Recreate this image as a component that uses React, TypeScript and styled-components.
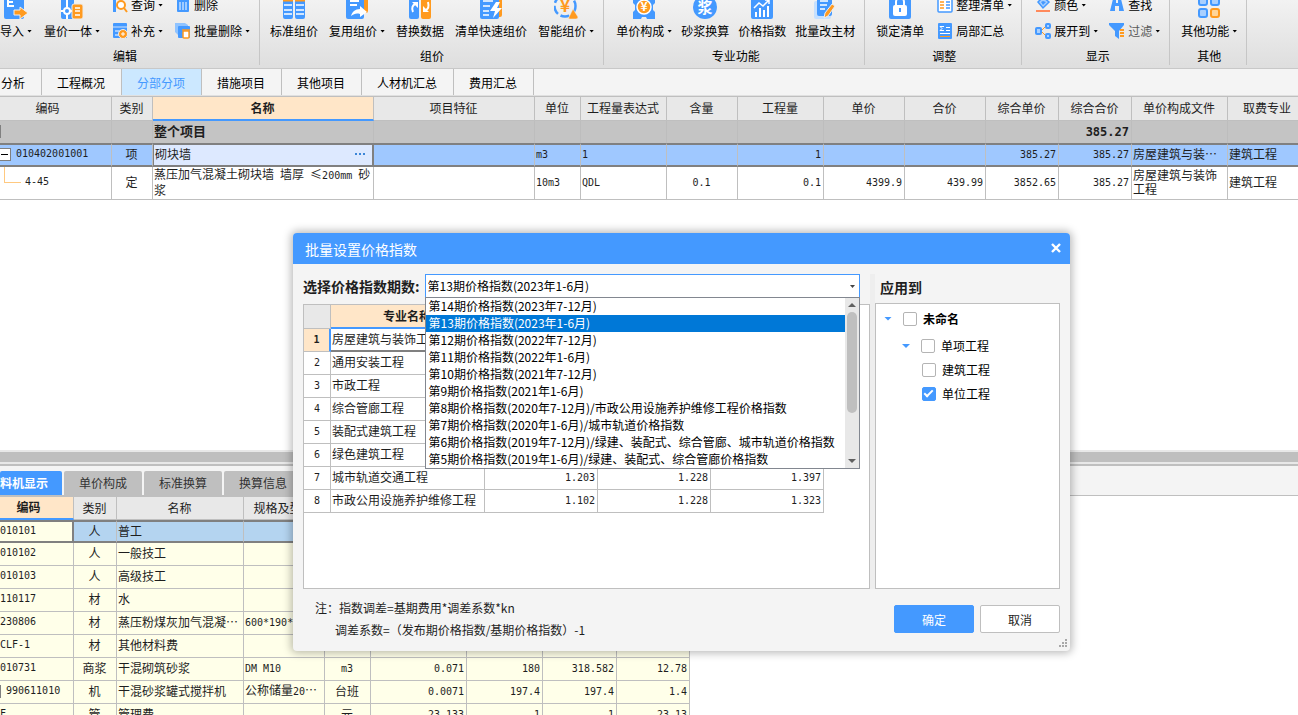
import React, { useState } from "react";
import styled, { createGlobalStyle, css } from "styled-components";

const BLUE = "#4499ff";
const ORANGE = "#ff9a1f";
const LINE = "#bfbfbf";
const CJK = `"Noto Sans CJK SC", "Liberation Sans", sans-serif`;
const MONO = `"DejaVu Sans Mono", "Noto Sans CJK SC", monospace`;

const GlobalStyle = createGlobalStyle`
  *, *::before, *::after { box-sizing: border-box; }
  body { margin: 0; background: #fff; color: #1e1e1e; font: 12px/16px ${CJK}; overflow: hidden; }
  button, select, input { font: inherit; color: inherit; }
`;

const Page = styled.div`
  position: relative;
  display: flex;
  flex-direction: column;
  height: 100vh;
  overflow: hidden;
`;

/* ---------- ribbon ---------- */

const Ribbon = styled.header`
  display: flex;
  align-items: flex-end;
  flex: none;
  height: 69px;
  padding-bottom: 3px;
  overflow: hidden;
  color: #000;
  background: linear-gradient(#f2f2f2, #dedede);
  border-bottom: 1px solid #c8c8c8;
`;

const Group = styled.section<{ $start: number }>`
  flex: none;
  padding: 0 9px 1px ${(p) => p.$start}px;
  border-right: 1px solid #c6c6c6;
`;

const GroupBody = styled.div<{ $gap: number }>`
  display: flex;
  align-items: flex-end;
  gap: ${(p) => p.$gap}px;
`;

const GroupLabel = styled.div`
  margin-top: 4px;
  text-align: center;
`;

const BigButton = styled.button`
  display: flex;
  flex-direction: column;
  align-items: center;
  gap: 4px;
  padding: 0 0 5px;
  border: 0;
  background: none;
  white-space: nowrap;
`;

const SmallColumn = styled.div`
  display: flex;
  flex-direction: column;
`;

const SmallButton = styled.button<{ $dim?: boolean }>`
  display: flex;
  align-items: center;
  gap: 3px;
  height: 26px;
  padding: 0;
  border: 0;
  background: none;
  white-space: nowrap;
  color: ${(p) => (p.$dim ? "#5a5a5a" : "#000")};
`;

const Caption = styled.span`
  display: flex;
  align-items: center;
  gap: 3px;
`;

const Caret = styled.i`
  width: 5px;
  height: 3px;
  background: #000;
  clip-path: polygon(0 0, 100% 0, 50% 100%);
`;

const Svg24 = ({ children }: { children: React.ReactNode }) => (
  <svg width="24" height="24" viewBox="0 0 24 24" fill="none" aria-hidden="true">{children}</svg>
);
const Svg16 = ({ children }: { children: React.ReactNode }) => (
  <svg width="16" height="16" viewBox="0 0 16 16" fill="none" aria-hidden="true">{children}</svg>
);

const ImportIcon = () => (
  <Svg24>
    <rect x="0" y="1" width="20" height="23" rx="2" fill={BLUE} />
    <path d="M9 4H4v7h6M4 7h5" stroke="#fff" strokeWidth="2" />
    <path d="M10 15h6v-3l8 6-8 6v-4h-6z" fill={ORANGE} stroke="#efefef" strokeWidth="1" />
  </Svg24>
);
const AllInOneIcon = () => (
  <Svg24>
    <rect x="1" y="1" width="13" height="23" rx="2" fill={BLUE} />
    <circle cx="7" cy="16" r="3" fill={BLUE} stroke="#fff" strokeWidth="2" />
    <path d="M7 2v11M7 19v5M1 16h3M10 16h3" stroke="#fff" strokeWidth="2" />
    <rect x="12" y="9" width="11" height="15" rx="2" fill={ORANGE} stroke="#ececec" />
    <path d="M15 13h5M15 16h5M15 20h5" stroke="#fff" strokeWidth="1.5" />
  </Svg24>
);
const StandardIcon = () => (
  <Svg24>
    <rect x="1" y="2" width="10" height="22" rx="2" fill={BLUE} />
    <rect x="13" y="2" width="10" height="22" rx="2" fill={BLUE} />
    <path d="M1 5h10M13 5h10" stroke={ORANGE} strokeWidth="3" />
    <path d="M2 10h8M2 15h8M2 19h8M14 10h8M14 15h8M14 19h8" stroke="#fff" strokeWidth="1.5" />
  </Svg24>
);
const ReuseIcon = () => (
  <Svg24>
    <rect x="12" y="1" width="11" height="17" rx="2" fill={ORANGE} />
    <rect x="1" y="1" width="18" height="23" rx="2" fill={BLUE} />
    <path d="M5 6h9M5 10h7" stroke="#fff" strokeWidth="2" />
    <path d="M6 21c1-4 4-7 9-7v-3l7 6-7 5v-3c-4-1-6 0-9 2z" fill="#fff" />
  </Svg24>
);
const ReplaceIcon = () => (
  <Svg24>
    <rect x="1" y="1" width="10" height="23" rx="2" fill={BLUE} />
    <rect x="13" y="1" width="10" height="23" rx="2" fill={ORANGE} />
    <path d="M5 17c-2-4 0-7 2-8M20 7c1 4 0 7-2 8" stroke="#fff" strokeWidth="2" />
    <path d="M4 7h6v6zM21 17h-6v-6z" fill="#fff" />
  </Svg24>
);
const QuickIcon = () => (
  <Svg24>
    <rect x="12" y="1" width="11" height="21" rx="2" fill={ORANGE} />
    <rect x="1" y="1" width="19" height="23" rx="2" fill={BLUE} />
    <path d="M4 6h10M4 11h7M4 16h6M4 20h6" stroke="#fff" strokeWidth="1.5" />
    <path d="M17 7l-6 9h5l-2 7 9-10h-5l3-6z" fill="#fff" />
  </Svg24>
);
const SmartIcon = () => (
  <Svg24>
    <circle cx="11" cy="11" r="10.5" stroke={BLUE} strokeWidth="2.5" strokeDasharray="9 3" />
    <text x="11" y="17" textAnchor="middle" fontSize="17" fontWeight="bold" fill={ORANGE}>¥</text>
    <path d="M19 14l5 8q0 2-2 2h-6q-2 0-1-2z" fill={ORANGE} stroke="#eee" strokeWidth=".5" />
  </Svg24>
);
const UnitPriceIcon = () => (
  <Svg24>
    <path d="M1 1h22v7l-2 2v5l2 2v7h-8l-1-2h-4l-1 2H1v-7l2-2v-5L1 8z" fill={BLUE} />
    <circle cx="12" cy="12" r="7" fill={ORANGE} stroke="#fff" strokeWidth="1.5" />
    <text x="12" y="16" textAnchor="middle" fontSize="12" fontWeight="bold" fill="#fff">¥</text>
  </Svg24>
);
const MortarIcon = () => (
  <Svg24>
    <circle cx="12" cy="12" r="12" fill={BLUE} />
    <text x="12" y="18" textAnchor="middle" fontSize="15" fontWeight="bold" fill="#fff">浆</text>
  </Svg24>
);
const IndexIcon = () => (
  <Svg24>
    <rect x="1" y="1" width="22" height="23" rx="2" fill={BLUE} />
    <path d="M6 22v-5M10 22v-9M14 22v-7M18 22V11" stroke="#fff" strokeWidth="2" />
    <path d="M4 13l5-5 4 3 6-6M15 5h4v4" stroke="#fff" strokeWidth="1.5" />
  </Svg24>
);
const EditMaterialIcon = () => (
  <Svg24>
    <rect x="1" y="6" width="17" height="18" rx="2" fill="#c5e0ff" />
    <rect x="4" y="1" width="15" height="20" rx="2" fill={BLUE} />
    <path d="M7 6h8M7 10h7M7 14h5" stroke="#fff" strokeWidth="1.5" />
    <path d="M19 9l3 2-7 10-4 2 1-5z" fill={ORANGE} stroke="#e9eef5" strokeWidth="1" />
  </Svg24>
);
const LockIcon = () => (
  <Svg24>
    <rect x="1" y="1" width="22" height="23" rx="2" fill={BLUE} />
    <rect x="5" y="10" width="14" height="11" rx="2" fill="#fff" />
    <path d="M8 11V7a4 4 0 0 1 8 0v4" stroke="#fff" strokeWidth="2" />
    <path d="M12 13v4" stroke={BLUE} strokeWidth="2" />
  </Svg24>
);
const OtherIcon = () => (
  <Svg24>
    {[[2, 2], [14, 2], [2, 14], [14, 14]].map(([x, y]) => (
      <rect key={`${x}-${y}`} x={x} y={y} width="8" height="8" rx="2" strokeWidth="2"
        fill={x + y === 28 ? "#ffd59a" : "#a9d0ff"} stroke={x + y === 28 ? ORANGE : BLUE} />
    ))}
  </Svg24>
);

const QueryIcon = () => (
  <Svg16>
    <path d="M1 0h3v15H1z" fill={BLUE} />
    <circle cx="9" cy="8" r="4" stroke={ORANGE} strokeWidth="2" fill="#fff" />
    <path d="M12 11l3 4" stroke={ORANGE} strokeWidth="2" />
  </Svg16>
);
const AddIcon = () => (
  <Svg16>
    <rect x="1" y="0" width="14" height="15" rx="1" fill={BLUE} />
    <path d="M1 4h14" stroke="#cfe4ff" />
    <path d="M3 8h5M3 12h4" stroke="#fff" />
    <circle cx="11" cy="11" r="4.5" fill={ORANGE} stroke="#eee" />
    <path d="M11 9v4M9 11h4" stroke="#fff" />
  </Svg16>
);
const TrashIcon = () => (
  <Svg16>
    <path d="M2 3h12v11q0 1-1 1H3q-1 0-1-1z" fill={BLUE} />
    <path d="M5 5v8M8 5v8M11 5v8" stroke="#fff" />
  </Svg16>
);
const BatchTrashIcon = () => (
  <Svg16>
    <path d="M0 0h10l3 2v10H3L0 9z" fill="#8fc3ff" />
    <rect x="3" y="3" width="12" height="12" rx="1" fill={BLUE} />
    <rect x="8" y="8" width="6" height="7" rx="1" fill="#fff" stroke={ORANGE} strokeWidth="1.5" />
    <path d="M7 7h8" stroke={ORANGE} strokeWidth="1.5" />
  </Svg16>
);
const TidyIcon = () => (
  <Svg16>
    <rect x="1" y="0" width="14" height="15" rx="1" stroke={BLUE} strokeWidth="1.5" fill="#fff" />
    <path d="M3 5h4M3 8h4M3 11h4" stroke={ORANGE} strokeWidth="1.5" />
    <path d="M9 5h4M9 8h4M9 11h4" stroke={BLUE} strokeWidth="1.5" />
  </Svg16>
);
const SumIcon = () => (
  <Svg16>
    <rect x="1" y="0" width="14" height="16" rx="1" fill={BLUE} />
    <path d="M7 3.500H3l2 2-2 2h4M9 4.500h4M9 7.500h4M3 10.500h10" stroke="#fff" />
    <path d="M3 13.500h10" stroke={ORANGE} />
  </Svg16>
);
const ColorIcon = () => (
  <Svg16>
    <path d="M8 0l6 5-6 6-5-6z" fill="#a9d0ff" stroke={BLUE} strokeWidth="1.5" />
    <path d="M8 4l3 1-3 3-2-3z" fill={BLUE} />
    <path d="M1 14h14" stroke="#ff8a5c" strokeWidth="2" />
  </Svg16>
);
const ExpandIcon = () => (
  <Svg16>
    <path d="M6 8l5-5M6 8l5 5" stroke={ORANGE} />
    <rect x="1" y="5" width="5" height="6" rx="1" fill="#a9d0ff" stroke={BLUE} strokeWidth="2" />
    <rect x="11" y="1" width="4" height="4" rx="1" fill="#a9d0ff" stroke={BLUE} strokeWidth="2" />
    <rect x="11" y="11" width="4" height="4" rx="1" fill="#a9d0ff" stroke={BLUE} strokeWidth="2" />
  </Svg16>
);
const FindIcon = () => (
  <Svg16>
    <path d="M4 2h3v4h2V2h3l3 12h-5V9H6v5H1z" fill={BLUE} />
  </Svg16>
);
const FilterIcon = () => (
  <Svg16>
    <path d="M0 0h15v2l-5 6v8l-4-3V8L0 2z" fill={BLUE} />
    <path d="M11 7h4M11 10h4M11 13h4" stroke={ORANGE} strokeWidth="2" />
  </Svg16>
);

type Tool = { text: string; icon: () => React.ReactElement; menu?: boolean; dim?: boolean };

const Big = ({ text, icon: Icon, menu }: Tool) => (
  <BigButton type="button">
    <Icon />
    <Caption>{text}{menu && <Caret />}</Caption>
  </BigButton>
);

const Small = ({ text, icon: Icon, menu, dim }: Tool) => (
  <SmallButton type="button" $dim={dim}>
    <Icon />
    <Caption>{text}{menu && <Caret />}</Caption>
  </SmallButton>
);

type RibbonGroup = { label: string; start: number; gap: number; big: Tool[]; small: Tool[][] };

const ribbon: RibbonGroup[] = [
  {
    label: "编辑", start: 0, gap: 12,
    big: [{ text: "导入", icon: ImportIcon, menu: true }, { text: "量价一体", icon: AllInOneIcon, menu: true }],
    small: [
      [{ text: "查询", icon: QueryIcon, menu: true }, { text: "补充", icon: AddIcon, menu: true }],
      [{ text: "删除", icon: TrashIcon }, { text: "批量删除", icon: BatchTrashIcon, menu: true }],
    ],
  },
  {
    label: "组价", start: 10, gap: 11,
    big: [
      { text: "标准组价", icon: StandardIcon },
      { text: "复用组价", icon: ReuseIcon, menu: true },
      { text: "替换数据", icon: ReplaceIcon },
      { text: "清单快速组价", icon: QuickIcon },
      { text: "智能组价", icon: SmartIcon, menu: true },
    ],
    small: [],
  },
  {
    label: "专业功能", start: 12, gap: 9,
    big: [
      { text: "单价构成", icon: UnitPriceIcon, menu: true },
      { text: "砂浆换算", icon: MortarIcon },
      { text: "价格指数", icon: IndexIcon },
      { text: "批量改主材", icon: EditMaterialIcon },
    ],
    small: [],
  },
  {
    label: "调整", start: 11, gap: 13,
    big: [{ text: "锁定清单", icon: LockIcon }],
    small: [[{ text: "整理清单", icon: TidyIcon, menu: true }, { text: "局部汇总", icon: SumIcon }]],
  },
  {
    label: "显示", start: 13, gap: 11,
    big: [],
    small: [
      [{ text: "颜色", icon: ColorIcon, menu: true }, { text: "展开到", icon: ExpandIcon, menu: true }],
      [{ text: "查找", icon: FindIcon }, { text: "过滤", icon: FilterIcon, menu: true, dim: true }],
    ],
  },
  { label: "其他", start: 11, gap: 0, big: [{ text: "其他功能", icon: OtherIcon, menu: true }], small: [] },
];

/* ---------- page tabs ---------- */

const PageTabs = styled.nav`
  display: flex;
  flex: none;
  height: 27px;
  background: #f4f4f4;
  border-bottom: 1px solid #e0e0e0;
`;

const PageTab = styled.button<{ $active?: boolean }>`
  padding: 2px 16px 0 15px;
  border: 0;
  border-right: 1px solid ${LINE};
  background: ${(p) => (p.$active ? "#cce8ff" : "transparent")};
  color: ${(p) => (p.$active ? BLUE : "#000")};
  &:first-child { padding-left: 1px; }
`;

/* ---------- data grids ---------- */

const Latin = styled.span`
  font-family: ${MONO};
  font-size: 10px;
`;

/* Latin runs take the half-width face, so that two of them fill one ideograph. */
const CellText = ({ text }: { text: string }) => (
  <>
    {text.split(/([\x20-\x7e]+)/).map((run, i) => (i % 2 ? <Latin key={i}>{run}</Latin> : run))}
  </>
);

type Align = "left" | "center" | "right";

const Grid = styled.table`
  border-spacing: 0;
  table-layout: fixed;
  border-top: 1px solid ${LINE};
`;

const MainGrid = styled(Grid)`
  width: 100%;
  min-width: 1308px;
`;

const Th = styled.th<{ $active?: boolean; $clipped?: boolean }>`
  height: 24px;
  padding: 0 ${(p) => (p.$clipped ? 16 : 1)}px 1px 0;
  overflow: hidden;
  white-space: nowrap;
  font-weight: ${(p) => (p.$active ? "bold" : "normal")};
  background: ${(p) => (p.$active ? "#ffe6c8" : "#e8e8e8")};
  border-right: 1px solid ${LINE};
  border-bottom: ${(p) => (p.$active ? `2px solid ${BLUE}` : `1px solid ${LINE}`)};
`;

const Td = styled.td<{ $align?: Align; $wrap?: boolean }>`
  position: relative;
  height: 23px;
  padding: 0 ${(p) => (p.$wrap ? 0 : 2)}px 2px 1px;
  overflow: hidden;
  line-height: 14px;
  white-space: ${(p) => (p.$wrap ? "normal" : "nowrap")};
  text-align: ${(p) => p.$align ?? "left"};
  border-right: 1px solid ${LINE};
  border-bottom: 1px solid ${LINE};
`;

const TotalRow = styled.tr`
  font-size: 13px;
  font-weight: bold;
  background: #c4c4c4;
  td { height: 22px; border-bottom: 0; border-right-color: #bdbdbd; }
  ${Latin} { font-size: 12px; }
`;

const CurrentRow = styled.tr`
  background: #9fc8ff;
  td { height: 24px; border-top: 2px solid #808080; border-bottom: 2px solid #808080; }
`;

const SubRow = styled.tr`
  background: #fff;
  td { height: 33px; }
`;

const Editing = styled(Td)`
  background: #dde9ff;
  border-right: 2px solid #808080;
  box-shadow: inset 1px 0 #808080;
`;

const EditLine = styled.div`
  display: flex;
  justify-content: space-between;
  padding: 0 5px 0 1px;
`;

const MoreButton = styled.button`
  display: flex;
  align-items: center;
  gap: 2px;
  padding: 0;
  border: 0;
  background: none;
  &::before, &::after, i { content: ""; width: 2px; height: 2px; background: #3b86d8; }
`;

const CodeLine = styled.div<{ $indent?: number }>`
  display: flex;
  align-items: center;
  gap: 5px;
  margin-left: -1px;
  padding-left: ${(p) => p.$indent ?? 0}px;
`;

const Collapse = styled.button`
  display: flex;
  align-items: center;
  width: 11px;
  height: 13px;
  padding: 0 0 0 1px;
  background: #fff;
  border: 1px solid #808080;
  border-left: 0;
  &::before { content: ""; width: 7px; height: 1px; background: #000; }
`;

const BoxEdge = styled.span`
  width: 1px;
  height: 13px;
  background: #808080;
`;

const Branch = styled.span`
  position: absolute;
  left: 4px;
  top: 0;
  width: 17px;
  height: 50%;
  border: solid #ffc980;
  border-width: 0 0 1px 1px;
`;

const GridArea = styled.main`
  flex: 1;
  min-height: 0;
  overflow: hidden;
`;

const mainColumns: [string, number | undefined][] = [
  ["编码", 112], ["类别", 41], ["名称", 221], ["项目特征", 161], ["单位", 46], ["工程量表达式", 86], ["含量", 71],
  ["工程量", 86], ["单价", 81], ["合价", 81], ["综合单价", 73], ["综合合价", 73], ["单价构成文件", 96], ["取费专业", undefined],
];

/* ---------- lower pane ---------- */

const Lower = styled.section`
  flex: 0 0 265px;
  overflow: hidden;
`;

const Splitter = styled.div`
  height: 16px;
  border-top: 2px solid #e8e8e8;
  border-bottom: 2px solid ${LINE};
  background: linear-gradient(${LINE} 10px, #e8e8e8 10px);
`;

const LowerTabs = styled.nav`
  display: flex;
  gap: 2px;
  height: 30px;
  padding-top: 5px;
  background: #f4f4f4;
  border-bottom: 1px solid ${LINE};
`;

const LowerTab = styled.button<{ $active?: boolean }>`
  padding: 0 15px;
  border: 0;
  border-radius: 2px 2px 0 0;
  background: ${(p) => (p.$active ? BLUE : LINE)};
  color: ${(p) => (p.$active ? "#fff" : "#333")};
  ${(p) => p.$active && css`padding: 0 14px 0 0; font-weight: bold;`}
`;

const LowerGrid = styled(Grid)`
  width: 690px;
  ${Th} { height: 23px; }
  td { background: #ffffe9; }
`;

const LowerCurrent = styled.tr`
  td { background: #b4d4f0; border-top: 2px solid #808080; border-bottom: 2px solid #808080; }
  td:first-child { background: #ffffe9; border-right: 2px solid #808080; }
`;

const lowerColumns: [string, number][] = [
  ["编码", 74], ["类别", 43], ["名称", 127], ["规格及型号", 81], ["", 46], ["", 96], ["", 76], ["", 74], ["", 73],
];

const lowerAlign: Align[] = ["left", "center", "left", "left", "center", "right", "right", "right", "right"];

const lowerRows: string[][] = [
  ["010101", "人", "普工", "", "", "", "", "", ""],
  ["010102", "人", "一般技工", "", "", "", "", "", ""],
  ["010103", "人", "高级技工", "", "", "", "", "", ""],
  ["110117", "材", "水", "", "", "", "", "", ""],
  ["230806", "材", "蒸压粉煤灰加气混凝…", "600*190*", "", "", "", "", ""],
  ["CLF-1", "材", "其他材料费", "", "", "", "", "", ""],
  ["010731", "商浆", "干混砌筑砂浆", "DM M10", "m3", "0.071", "180", "318.582", "12.78"],
  ["990611010", "机", "干混砂浆罐式搅拌机", "公称储量20…", "台班", "0.0071", "197.4", "197.4", "1.4"],
  ["F", "管", "管理费", "", "元", "23.133", "1", "1", "23.13"],
];

/* ---------- dialog ---------- */

const Dialog = styled.div`
  position: absolute;
  left: 293px;
  top: 233px;
  width: 777px;
  border-radius: 4px;
  background: #f4f4f4;
  box-shadow: 0 0 8px 2px rgba(0, 0, 0, 0.28);
`;

const TitleBar = styled.div`
  display: flex;
  align-items: center;
  justify-content: space-between;
  height: 31px;
  padding: 0 9px 0 12px;
  border-radius: 4px 4px 0 0;
  background: ${BLUE};
  color: #fff;
`;

const Title = styled.h1`
  margin: 0;
  font-size: 14px;
  font-weight: normal;
`;

const CloseButton = styled.button`
  display: flex;
  padding: 0 0 1px;
  border: 0;
  background: none;
`;

const Columns = styled.div`
  display: grid;
  grid-template-columns: 1fr 5px 185px;
  padding: 10px 10px 0;
`;

const Pane = styled.div`
  display: flex;
  flex-direction: column;
`;

const Divider = styled.div`
  background: #eeeeee;
`;

const PeriodRow = styled.div`
  display: flex;
  align-items: center;
  gap: 5px;
  padding-right: 10px;
`;

const PeriodLabel = styled.label`
  font-size: 14px;
  font-weight: bold;
  white-space: nowrap;
`;

const Combo = styled.div`
  position: relative;
  flex: 1;
`;

const Select = styled.select`
  display: block;
  width: 100%;
  height: 24px;
  padding: 0 2px;
  border: 1px solid ${BLUE};
  border-radius: 0;
  background: #fff;
  color: #000;
  appearance: none;
  outline: 0;
`;

const ComboCaret = styled(Caret)`
  position: absolute;
  right: 5px;
  top: 11px;
  background: #444;
  pointer-events: none;
`;

const Popup = styled.div`
  position: absolute;
  z-index: 1;
  top: 23px;
  left: 0;
  right: 0;
  display: flex;
  border: 1px solid #828790;
  background: #fff;
`;

const Options = styled.ul`
  flex: 1;
  margin: 0;
  padding: 0;
  list-style: none;
`;

const Option = styled.li<{ $selected: boolean }>`
  height: 17px;
  padding-left: 3px;
  line-height: 16px;
  white-space: nowrap;
  background: ${(p) => (p.$selected ? "#0078d7" : "#fff")};
  color: ${(p) => (p.$selected ? "#fff" : "#000")};
`;

const ScrollBar = styled.div`
  display: flex;
  flex-direction: column;
  align-items: center;
  width: 14px;
  padding: 5px 0;
  background: #e8e8e8;
`;

const ScrollArrow = styled.i<{ $down?: boolean }>`
  width: 8px;
  height: 4px;
  background: #606060;
  clip-path: ${(p) => (p.$down ? "polygon(0 0, 100% 0, 50% 100%)" : "polygon(0 100%, 50% 0, 100% 100%)")};
`;

const Thumb = styled.div`
  width: 10px;
  height: 101px;
  margin: 5px 0 auto;
  border-radius: 5px;
  background: ${LINE};
`;

const Box = styled.div`
  flex: 1;
  border: 1px solid ${LINE};
  background: #fff;
`;

const IndexBox = styled(Box)`
  height: 285px;
  flex: none;
  margin-top: 6px;
`;

const IndexGrid = styled(Grid)`
  width: 520px;
  border-top: 0;
`;

const RowNumber = styled.th`
  height: 23px;
  padding: 0;
  font: 10px/14px ${MONO};
  border-right: 1px solid ${LINE};
  border-bottom: 1px solid ${LINE};
`;

const IndexCurrent = styled.tr`
  ${RowNumber} { background: #ffe6c8; font-weight: bold; border-right: 2px solid ${BLUE}; }
  td { border-bottom: 2px solid #808080; }
`;

const indexRows: [string, string, string, string][] = [
  ["房屋建筑与装饰工程", "", "", ""],
  ["通用安装工程", "", "", ""],
  ["市政工程", "", "", ""],
  ["综合管廊工程", "", "", ""],
  ["装配式建筑工程", "", "", ""],
  ["绿色建筑工程", "", "", ""],
  ["城市轨道交通工程", "1.203", "1.228", "1.397"],
  ["市政公用设施养护维修工程", "1.102", "1.228", "1.323"],
];

const periods = [
  "第14期价格指数(2023年7-12月)",
  "第13期价格指数(2023年1-6月)",
  "第12期价格指数(2022年7-12月)",
  "第11期价格指数(2022年1-6月)",
  "第10期价格指数(2021年7-12月)",
  "第9期价格指数(2021年1-6月)",
  "第8期价格指数(2020年7-12月)/市政公用设施养护维修工程价格指数",
  "第7期价格指数(2020年1-6月)/城市轨道价格指数",
  "第6期价格指数(2019年7-12月)/绿建、装配式、综合管廊、城市轨道价格指数",
  "第5期价格指数(2019年1-6月)/绿建、装配式、综合管廊价格指数",
];

const ApplyTitle = styled.h2`
  height: 29px;
  margin: 0;
  padding: 5px 0 0 5px;
  font-size: 14px;
  line-height: 17px;
`;

const Tree = styled(Box)`
  display: flex;
  flex-direction: column;
  padding-top: 1px;
`;

const TreeRow = styled.div<{ $indent: number; $root?: boolean }>`
  display: flex;
  align-items: center;
  gap: 11px;
  height: ${(p) => (p.$root ? 27 : 24)}px;
  margin-bottom: ${(p) => (p.$root ? 2 : 0)}px;
  padding-left: ${(p) => p.$indent}px;
  font-weight: ${(p) => (p.$root ? "bold" : "normal")};
  color: #000;
`;

const TreeCaret = styled.i`
  width: 8px;
  height: 4px;
  background: ${BLUE};
  clip-path: polygon(0 0, 100% 0, 50% 100%);
`;

const CheckLabel = styled.label`
  display: flex;
  align-items: center;
  gap: 6px;
`;

const Check = styled.input`
  width: 14px;
  height: 14px;
  margin: 0;
  border: 1px solid #b4b4b4;
  border-radius: 2px;
  background: #fff;
  appearance: none;
  &:checked {
    border-color: ${BLUE};
    background: ${BLUE};
  }
  &:checked::after {
    content: "";
    display: block;
    width: 9px;
    height: 5px;
    margin: 2px 0 0 1px;
    border: solid #fff;
    border-width: 0 0 2px 2px;
    transform: rotate(-45deg);
  }
`;

const tree = [
  { text: "未命名", indent: 8, open: true, root: true },
  { text: "单项工程", indent: 26, open: true },
  { text: "建筑工程", indent: 46 },
  { text: "单位工程", indent: 46 },
];

const Footer = styled.div`
  display: flex;
  justify-content: space-between;
  height: 62px;
  padding: 8px 10px 0 22px;
`;

const Note = styled.p<{ $indent?: boolean }>`
  margin: 0;
  padding-left: ${(p) => (p.$indent ? 20 : 0)}px;
  line-height: 22px;
`;

const Actions = styled.div`
  display: flex;
  gap: 6px;
  padding-top: 8px;
`;

const ActionButton = styled.button<{ $primary?: boolean }>`
  width: 80px;
  height: 28px;
  padding: 1px 0 0;
  border: 1px solid ${(p) => (p.$primary ? BLUE : LINE)};
  border-radius: 2px;
  background: ${(p) => (p.$primary ? BLUE : "#fff")};
  color: ${(p) => (p.$primary ? "#fff" : "#1e1e1e")};
`;

const Grip = styled.svg`
  position: absolute;
  right: 3px;
  bottom: 4px;
`;

const PriceIndexDialog = () => {
  const [period, setPeriod] = useState(1);
  const [open, setOpen] = useState(true);
  const [checked, setChecked] = useState([false, false, false, true]);
  return (
    <Dialog role="dialog" aria-labelledby="dialog-title">
      <TitleBar>
        <Title id="dialog-title">批量设置价格指数</Title>
        <CloseButton type="button" aria-label="关闭">
          <svg width="10" height="10" viewBox="0 0 10 10"><path d="M1 1l8 8M9 1l-8 8" stroke="#fff" strokeWidth="2.4" /></svg>
        </CloseButton>
      </TitleBar>
      <Columns>
        <Pane>
          <PeriodRow>
            <PeriodLabel htmlFor="period">选择价格指数期数:</PeriodLabel>
            <Combo>
              <Select
                id="period"
                value={period}
                onChange={(e) => setPeriod(Number(e.target.value))}
                onMouseDown={(e) => { e.preventDefault(); setOpen(!open); }}
              >
                {periods.map((p, i) => <option key={p} value={i}>{p}</option>)}
              </Select>
              <ComboCaret />
              {open && (
                <Popup>
                  <Options role="listbox" aria-label="期数">
                    {periods.map((p, i) => (
                      <Option key={p} role="option" aria-selected={i === period} $selected={i === period}
                        onClick={() => { setPeriod(i); setOpen(false); }}>{p}</Option>
                    ))}
                  </Options>
                  <ScrollBar><ScrollArrow /><Thumb /><ScrollArrow $down /></ScrollBar>
                </Popup>
              )}
            </Combo>
          </PeriodRow>
          <IndexBox>
            <IndexGrid>
              <colgroup><col width="27" /><col width="154" /><col width="113" /><col width="113" /><col width="113" /></colgroup>
              <thead><tr><Th /><Th $active>专业名称</Th><Th /><Th /><Th /></tr></thead>
              <tbody>
                {indexRows.map(([name, ...values], i) => {
                  const Row = i === 0 ? IndexCurrent : "tr";
                  return (
                    <Row key={name}>
                      <RowNumber scope="row">{i + 1}</RowNumber>
                      <Td>{name}</Td>
                      {values.map((v, j) => <Td key={j} $align="right"><CellText text={v} /></Td>)}
                    </Row>
                  );
                })}
              </tbody>
            </IndexGrid>
          </IndexBox>
        </Pane>
        <Divider />
        <Pane>
          <ApplyTitle>应用到</ApplyTitle>
          <Tree>
            {tree.map((node, i) => (
              <TreeRow key={node.text} $indent={node.indent} $root={node.root}>
                {node.open && <TreeCaret />}
                <CheckLabel>
                  <Check type="checkbox" checked={checked[i]}
                    onChange={() => setChecked(checked.map((c, j) => (j === i ? !c : c)))} />
                  {node.text}
                </CheckLabel>
              </TreeRow>
            ))}
          </Tree>
        </Pane>
      </Columns>
      <Footer>
        <div>
          <Note>注：指数调差=基期费用*调差系数*kn</Note>
          <Note $indent>调差系数=（发布期价格指数/基期价格指数）-1</Note>
        </div>
        <Actions>
          <ActionButton type="button" $primary>确定</ActionButton>
          <ActionButton type="button">取消</ActionButton>
        </Actions>
      </Footer>
      <Grip width="8" height="8" viewBox="0 0 8 8" fill="#a8a8a8" aria-hidden="true">
        <path d="M6 0h2v2H6zM3 3h2v2H3zM6 3h2v2H6zM0 6h2v2H0zM3 6h2v2H3zM6 6h2v2H6z" />
      </Grip>
    </Dialog>
  );
};

/* ---------- page ---------- */

const pageTabs = ["分析", "工程概况", "分部分项", "措施项目", "其他项目", "人材机汇总", "费用汇总"];
const lowerTabs = ["料机显示", "单价构成", "标准换算", "换算信息"];

export default function App() {
  return (
    <Page>
      <GlobalStyle />
      <Ribbon>
        {ribbon.map((g) => (
          <Group key={g.label} $start={g.start}>
            <GroupBody $gap={g.gap}>
              {g.big.map((t) => <Big key={t.text} {...t} />)}
              {g.small.map((column, i) => (
                <SmallColumn key={i}>{column.map((t) => <Small key={t.text} {...t} />)}</SmallColumn>
              ))}
            </GroupBody>
            <GroupLabel>{g.label}</GroupLabel>
          </Group>
        ))}
      </Ribbon>
      <PageTabs>
        {pageTabs.map((t) => <PageTab key={t} type="button" $active={t === "分部分项"}>{t}</PageTab>)}
      </PageTabs>
      <GridArea>
        <MainGrid>
          <colgroup>{mainColumns.map(([name, width]) => <col key={name} width={width} />)}</colgroup>
          <thead>
            <tr>
              {mainColumns.map(([name], i) => (
                <Th key={name} $active={name === "名称"} $clipped={i === 0}>{name}</Th>
              ))}
            </tr>
          </thead>
          <tbody>
            <TotalRow>
              <Td><CodeLine><BoxEdge /></CodeLine></Td>
              <Td />
              <Td>整个项目</Td>
              <Td /><Td /><Td /><Td /><Td /><Td /><Td /><Td />
              <Td $align="right"><CellText text="385.27" /></Td>
              <Td /><Td />
            </TotalRow>
            <CurrentRow>
              <Td><CodeLine><Collapse type="button" aria-label="折叠" /><CellText text="010402001001" /></CodeLine></Td>
              <Td $align="center">项</Td>
              <Editing>
                <EditLine>砌块墙<MoreButton type="button" aria-label="更多"><i /></MoreButton></EditLine>
              </Editing>
              <Td />
              <Td><CellText text="m3" /></Td>
              <Td><CellText text="1" /></Td>
              <Td />
              <Td $align="right"><CellText text="1" /></Td>
              <Td /><Td />
              <Td $align="right"><CellText text="385.27" /></Td>
              <Td $align="right"><CellText text="385.27" /></Td>
              <Td>房屋建筑与装…</Td>
              <Td>建筑工程</Td>
            </CurrentRow>
            <SubRow>
              <Td><Branch /><CodeLine $indent={25}><CellText text="4-45" /></CodeLine></Td>
              <Td $align="center">定</Td>
              <Td $wrap><CellText text="蒸压加气混凝土砌块墙 墙厚 ≤200mm 砂浆" /></Td>
              <Td />
              <Td><CellText text="10m3" /></Td>
              <Td><CellText text="QDL" /></Td>
              <Td $align="center"><CellText text="0.1" /></Td>
              <Td $align="right"><CellText text="0.1" /></Td>
              <Td $align="right"><CellText text="4399.9" /></Td>
              <Td $align="right"><CellText text="439.99" /></Td>
              <Td $align="right"><CellText text="3852.65" /></Td>
              <Td $align="right"><CellText text="385.27" /></Td>
              <Td $wrap>房屋建筑与装饰工程</Td>
              <Td>建筑工程</Td>
            </SubRow>
          </tbody>
        </MainGrid>
      </GridArea>
      <Lower>
        <Splitter />
        <LowerTabs>
          {lowerTabs.map((t, i) => <LowerTab key={t} type="button" $active={i === 0}>{t}</LowerTab>)}
        </LowerTabs>
        <LowerGrid>
          <colgroup>{lowerColumns.map(([, width], i) => <col key={i} width={width} />)}</colgroup>
          <thead>
            <tr>
              {lowerColumns.map(([name], i) => <Th key={i} $active={i === 0} $clipped={i === 0}>{name}</Th>)}
            </tr>
          </thead>
          <tbody>
            {lowerRows.map((cells, r) => {
              const Row = r === 0 ? LowerCurrent : "tr";
              return (
                <Row key={r}>
                  {cells.map((text, c) => (
                    <Td key={c} $align={lowerAlign[c]}>
                      {c === 0
                        ? <CodeLine>{text.length === 9 && <BoxEdge />}<CellText text={text} /></CodeLine>
                        : <CellText text={text} />}
                    </Td>
                  ))}
                </Row>
              );
            })}
          </tbody>
        </LowerGrid>
      </Lower>
      <PriceIndexDialog />
    </Page>
  );
}
